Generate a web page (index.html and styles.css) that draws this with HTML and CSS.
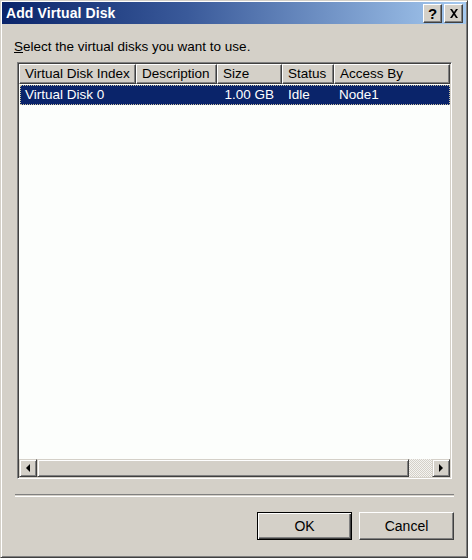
FILE: index.html
```html
<!DOCTYPE html>
<html>
<head>
<meta charset="utf-8">
<link rel="stylesheet" href="styles.css">
</head>
<body>
<div class="window">
  <div class="titlebar">
    <span class="title">Add Virtual Disk</span>
    <div class="tbtns">
      <span class="tbtn help">?</span>
      <span class="tbtn close"><svg width="10" height="9" viewBox="0 0 10 9"><path d="M1 0h2l2 3 2-3h2L6 4.5 9 9H7L5 6 3 9H1l3-4.5z" fill="#000"/></svg></span>
    </div>
  </div>
  <div class="body">
    <div class="label"><u>S</u>elect the virtual disks you want to use.</div>
    <div class="listview">
      <div class="header">
        <div class="hcell c1">Virtual Disk Index</div>
        <div class="hcell c2">Description</div>
        <div class="hcell c3">Size</div>
        <div class="hcell c4">Status</div>
        <div class="hcell c5">Access By</div>
      </div>
      <div class="rows">
        <div class="row selected">
          <div class="cell c1">Virtual Disk 0</div>
          <div class="cell c2"></div>
          <div class="cell c3 right">1.00 GB</div>
          <div class="cell c4">Idle</div>
          <div class="cell c5">Node1</div>
        </div>
      </div>
      <div class="hscroll">
        <div class="sbtn"><svg width="4" height="8" viewBox="0 0 4 8"><path d="M4 0v8L0 4z" fill="#000"/></svg></div>
        <div class="thumb"></div>
        <div class="track"></div>
        <div class="sbtn"><svg width="4" height="8" viewBox="0 0 4 8"><path d="M0 0v8l4-4z" fill="#000"/></svg></div>
      </div>
    </div>
    <div class="separator"></div>
    <div class="buttons">
      <div class="btn default">OK</div>
      <div class="btn">Cancel</div>
    </div>
  </div>
</div>
</body>
</html>
```
FILE: styles.css
```css
html, body {
  margin: 0;
  padding: 0;
  background: #ffffff;
}
.window {
  width: 468px;
  height: 558px;
  box-sizing: border-box;
  background: #d4d0c8;
  border-top: 1px solid #d4d0c8;
  border-left: 1px solid #d4d0c8;
  border-right: 1px solid #404040;
  border-bottom: 1px solid #404040;
  box-shadow: inset 1px 1px 0 #ffffff, inset -1px -1px 0 #808080;
  padding: 1px;
  display: flex;
  flex-direction: column;
  font-family: "Liberation Sans", Arial, sans-serif;
  font-size: 13.5px;
  color: #000;
}
.titlebar {
  height: 22px;
  flex: none;
  background: linear-gradient(to right, #0a246a 0%, #3a5a9a 40%, #a6caf0 100%);
  display: flex;
  align-items: center;
  justify-content: space-between;
  padding: 0 3px 0 4px;
}
.title {
  color: #fff;
  font-weight: bold;
  font-size: 14px;
  letter-spacing: 0.1px;
}
.tbtns {
  display: flex;
  gap: 2px;
}
.tbtn {
  width: 19px;
  height: 19px;
  box-sizing: border-box;
  background: #d4d0c8;
  border-top: 1px solid #ffffff;
  border-left: 1px solid #ffffff;
  border-right: 1px solid #404040;
  border-bottom: 1px solid #404040;
  box-shadow: inset -1px -1px 0 #808080;
  display: flex;
  align-items: center;
  justify-content: center;
  font-weight: bold;
  font-size: 15px;
  line-height: 1;
}
.body {
  flex: 1;
  display: flex;
  flex-direction: column;
  padding: 0 12px 0 12px;
}
.label {
  margin-top: 15px;
  line-height: 16px;
  height: 16px;
}
.listview {
  margin-top: 7px;
  margin-left: 3px;
  width: 435px;
  height: 417px;
  box-sizing: border-box;
  border-top: 1px solid #808080;
  border-left: 1px solid #808080;
  border-right: 1px solid #ffffff;
  border-bottom: 1px solid #ffffff;
  box-shadow: inset 1px 1px 0 #404040, inset -1px -1px 0 #d4d0c8;
  padding: 1px;
  background: #fcfefc;
  display: flex;
  flex-direction: column;
}
.header {
  display: flex;
  height: 20px;
  flex: none;
}
.hcell {
  box-sizing: border-box;
  background: #d4d0c8;
  border-top: 1px solid #ffffff;
  border-left: 1px solid #ffffff;
  border-right: 1px solid #404040;
  border-bottom: 1px solid #404040;
  box-shadow: inset -1px -1px 0 #808080;
  padding-left: 5px;
  line-height: 18px;
  white-space: nowrap;
  overflow: hidden;
}
.c1 { width: 117px; flex: none; }
.c2 { width: 81px; flex: none; }
.c3 { width: 65px; flex: none; }
.c4 { width: 52px; flex: none; }
.c5 { flex: 1; }
.rows {
  flex: 1;
  padding-top: 1px;
}
.row {
  display: flex;
  height: 20px;
  box-sizing: border-box;
  margin-left: 1px;
}
.row.selected {
  background: #0a246a;
  color: #fff;
  outline: 1px dotted #c8c0a0;
  outline-offset: -1px;
}
.cell {
  box-sizing: border-box;
  padding-left: 5px;
  line-height: 20px;
  white-space: nowrap;
}
.row .c1 { width: 116px; }
.cell.right {
  text-align: right;
  padding-right: 8px;
}
.row .c4 { padding-left: 6px; }
.hscroll {
  height: 18px;
  flex: none;
  display: flex;
}
.sbtn {
  width: 18px;
  height: 18px;
  flex: none;
  box-sizing: border-box;
  background: #d4d0c8;
  border-top: 1px solid #d4d0c8;
  border-left: 1px solid #d4d0c8;
  border-right: 1px solid #404040;
  border-bottom: 1px solid #404040;
  box-shadow: inset 1px 1px 0 #ffffff, inset -1px -1px 0 #808080;
  display: flex;
  align-items: center;
  justify-content: center;
}
.thumb {
  width: 372px;
  flex: none;
  box-sizing: border-box;
  background: #d4d0c8;
  border-top: 1px solid #d4d0c8;
  border-left: 1px solid #d4d0c8;
  border-right: 1px solid #404040;
  border-bottom: 1px solid #404040;
  box-shadow: inset 1px 1px 0 #ffffff, inset -1px -1px 0 #808080;
}
.track {
  flex: 1;
  background-color: #e8e6e0;
  background-image: repeating-conic-gradient(#f4f3f0 0 25%, #d4d0c8 0 50%);
  background-size: 2px 2px;
}
.separator {
  margin-top: 15px;
  margin-left: 1px;
  width: 439px;
  height: 1px;
  border-top: 1px solid #808080;
  border-bottom: 1px solid #ffffff;
}
.buttons {
  margin-top: 15px;
  display: flex;
  justify-content: flex-end;
  gap: 7px;
  padding-right: 0;
}
.btn {
  width: 95px;
  height: 28px;
  box-sizing: border-box;
  background: #d4d0c8;
  border-top: 1px solid #ffffff;
  border-left: 1px solid #ffffff;
  border-right: 1px solid #404040;
  border-bottom: 1px solid #404040;
  box-shadow: inset -1px -1px 0 #808080;
  display: flex;
  align-items: center;
  justify-content: center;
  font-size: 14px;
}
.btn.default {
  border: 1px solid #000;
  box-shadow: inset 1px 1px 0 #ffffff, inset -1px -1px 0 #404040, inset -2px -2px 0 #808080;
}
```
